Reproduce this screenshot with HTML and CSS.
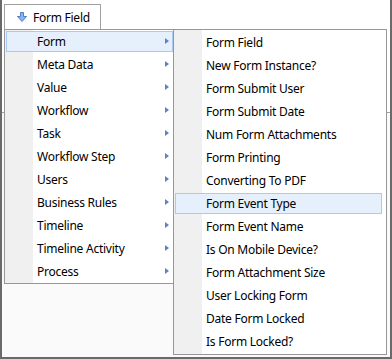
FILE: index.html
```html
<!DOCTYPE html>
<html>
<head>
<meta charset="utf-8">
<link rel="stylesheet" href="styles.css">
</head>
<body>
<div class="frame">
  <div class="toolbar">
    <div class="btn">
      <svg class="btn-icon" width="10" height="10" viewBox="0 0 10 10">
        <path d="M3.5 0.5 H6.5 V4.5 H9.5 L5 9.5 L0.5 4.5 H3.5 Z" fill="#8db4ea" stroke="#4f7fc6" stroke-width="1"/>
      </svg>
      <span>Form Field</span>
    </div>
  </div>
  <div class="panel"></div>

  <div class="menu menu-main">
    <div class="item hl">Form<i class="arr"></i></div>
    <div class="item">Meta Data<i class="arr"></i></div>
    <div class="item">Value<i class="arr"></i></div>
    <div class="item">Workflow<i class="arr"></i></div>
    <div class="item">Task<i class="arr"></i></div>
    <div class="item">Workflow Step<i class="arr"></i></div>
    <div class="item">Users<i class="arr"></i></div>
    <div class="item">Business Rules<i class="arr"></i></div>
    <div class="item">Timeline<i class="arr"></i></div>
    <div class="item">Timeline Activity<i class="arr"></i></div>
    <div class="item">Process<i class="arr"></i></div>
  </div>

  <div class="menu menu-sub">
    <div class="item">Form Field</div>
    <div class="item">New Form Instance?</div>
    <div class="item">Form Submit User</div>
    <div class="item">Form Submit Date</div>
    <div class="item">Num Form Attachments</div>
    <div class="item">Form Printing</div>
    <div class="item">Converting To PDF</div>
    <div class="item hl">Form Event Type</div>
    <div class="item">Form Event Name</div>
    <div class="item">Is On Mobile Device?</div>
    <div class="item">Form Attachment Size</div>
    <div class="item">User Locking Form</div>
    <div class="item">Date Form Locked</div>
    <div class="item">Is Form Locked?</div>
  </div>
</div>
</body>
</html>
```

FILE: styles.css
```css
* { box-sizing: border-box; }
html, body { margin: 0; padding: 0; }
body {
  width: 392px;
  height: 359px;
  overflow: hidden;
  font-family: "Noto Sans", "Open Sans", sans-serif;
  font-size: 12px;
  letter-spacing: -0.25px;
  color: #000;
}
.frame {
  position: relative;
  width: 392px;
  height: 359px;
  border: 2px solid #6a6a6a;
  border-top: none;
  background: #fafafa;
  display: flex;
  flex-direction: column;
}
.toolbar {
  height: 113px;
  background: #fff;
  border-bottom: 1px solid #a0a0a0;
  padding: 4px 0 0 2px;
}
.panel { flex: 1; }
.btn {
  width: 97px;
  height: 26px;
  border: 1px solid #a0a0a0;
  background: #fff;
  display: flex;
  align-items: center;
  padding-left: 12px;
  gap: 6px;
}
.btn-icon { display: block; }
.menu {
  position: absolute;
  border: 1px solid #979797;
  background: linear-gradient(to right, #f0f0f0 0, #f0f0f0 28px, #fff 28px);
}
.menu-main {
  left: 2px;
  top: 29px;
  width: 174px;
  height: 255px;
}
.menu-sub {
  left: 171px;
  top: 29px;
  width: 214px;
  height: 326px;
  padding-top: 1px;
}
.item {
  position: relative;
  isolation: isolate;
  height: 23px;
  padding-left: 32px;
  line-height: 23px;
  white-space: nowrap;
}
.item.hl::before {
  content: "";
  position: absolute;
  left: 1px;
  right: 4px;
  top: 1px;
  bottom: 1px;
  background: #e5f0fc;
  border: 1px solid #a9cbf2;
  z-index: -1;
}
.arr {
  position: absolute;
  right: 8px;
  top: 8px;
  width: 0;
  height: 0;
  border-left: 4px solid #5b84c8;
  border-top: 3.5px solid transparent;
  border-bottom: 3.5px solid transparent;
}
```
